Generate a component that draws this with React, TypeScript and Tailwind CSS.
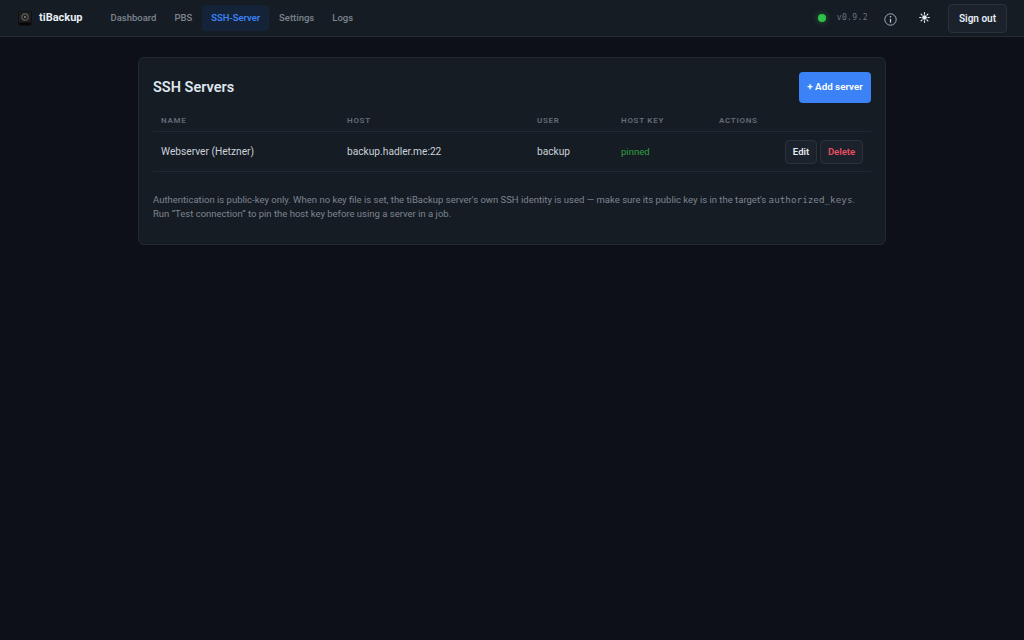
import React from "react";

function Logo() {
  return (
    <svg width="14" height="15" viewBox="0 0 14 15" className="block">
      <rect x="0" y="0" width="14" height="15" rx="2" fill="#111111" />
      <rect x="1" y="1" width="12" height="10" rx="1" fill="#1e1e1e" />
      <circle cx="7" cy="6" r="3.2" fill="none" stroke="#5c5c5c" strokeWidth="1.2" />
      <circle cx="7" cy="6" r="1" fill="#8a8a8a" />
      <rect x="2" y="12" width="10" height="2" fill="#060606" />
    </svg>
  );
}

const th = "pt-[3px] text-left text-[8px] leading-[12px] font-semibold tracking-[0.09em] text-[#646c77] uppercase";
const td = "pt-[2px]";

export default function App() {
  return (
    <div className="min-h-[640px] bg-[#0d1117] font-['Roboto',sans-serif] text-[#c9d1d9]">
      <header className="flex h-[37px] items-center border-b border-[#252c35] bg-[#161c24] pl-[18px] pr-[17px]">
        <Logo />
        <span className="ml-[7px] text-[11px] font-bold text-[#e6edf3]">tiBackup</span>
        <nav className="ml-[20px] flex items-center gap-[2px] text-[9.5px] font-medium text-[#7d8590]">
          <a className="px-2 py-[6px]">Dashboard</a>
          <a className="px-2 py-[6px]">PBS</a>
          <a className="rounded-[4px] bg-[#152339] px-[9px] py-[6px] text-[9.4px] font-semibold text-[#3b82f6]">SSH-Server</a>
          <a className="px-2 py-[6px]">Settings</a>
          <a className="px-2 py-[6px]">Logs</a>
        </nav>
        <div className="ml-auto flex items-center">
          <span className="h-2 w-2 rounded-full bg-[#2fc14a] shadow-[0_0_6px_#2ea04399]" />
          <span className="ml-[11px] font-['DejaVu_Sans_Mono',monospace] text-[8px] tracking-[0.05em] text-[#6b7480]">v0.9.2</span>
          <svg width="13" height="13" viewBox="0 0 13 13" className="ml-[16px] mt-[2px]" fill="none">
            <circle cx="6.5" cy="6.5" r="5.7" stroke="#a3abb5" strokeWidth="1" />
            <path d="M6.5 5.8v3.8" stroke="#c9d1d9" strokeWidth="1.2" />
            <circle cx="6.5" cy="3.8" r="0.8" fill="#c9d1d9" />
          </svg>
          <svg width="11" height="11" viewBox="0 0 24 24" className="ml-[22px] -mt-[2px]" fill="#e6edf3" stroke="#e6edf3" strokeWidth="2.6" strokeLinecap="round">
            <circle cx="12" cy="12" r="5" stroke="none" />
            <path d="M12 1.5v3M12 19.5v3M1.5 12h3M19.5 12h3M4.6 4.6l2.1 2.1M17.3 17.3l2.1 2.1M4.6 19.4l2.1-2.1M17.3 6.7l2.1-2.1" />
          </svg>
          <button className="ml-[18px] h-[29px] w-[59px] rounded-[4px] border border-[#2a313b] bg-[#1b222b] text-[10px] font-semibold text-[#e6edf3]">Sign out</button>
        </div>
      </header>

      <main className="mx-auto mt-[20px] w-[748px]">
        <section className="h-[188px] rounded-[6px] border border-[#222932] bg-[#161c24] px-[14px] pt-[14px]">
          <div className="flex h-[31px] items-center justify-between">
            <h1 className="text-[14.5px] font-semibold text-[#dfe6ee]">SSH Servers</h1>
            <button className="h-[31px] w-[72px] rounded-[4px] bg-[#3b82f6] text-[9.8px] font-semibold text-white">+ Add server</button>
          </div>
          <table className="mt-[5px] w-full table-fixed border-collapse text-[10.2px]">
            <colgroup>
              <col className="w-[194px]" />
              <col className="w-[190px]" />
              <col className="w-[84px]" />
              <col className="w-[98px]" />
              <col />
            </colgroup>
            <thead>
              <tr className="h-[23px] border-b border-[#222932]">
                <th className={`${th} pl-[8px]`}>Name</th>
                <th className={th}>Host</th>
                <th className={th}>User</th>
                <th className={th}>Host Key</th>
                <th className={th}>Actions</th>
              </tr>
            </thead>
            <tbody>
              <tr className="h-[40px] border-b border-[#222932] text-[#c9d1d9]">
                <td className={`${td} pl-[8px]`}>Webserver (Hetzner)</td>
                <td className={td}>backup.hadler.me:22</td>
                <td className={td}>backup</td>
                <td className={`${td} text-[9.5px] text-[#2ea043]`}>pinned</td>
                <td className={td}>
                  <div className="flex justify-end gap-[3px] pr-[8px]">
                    <button className="h-[24px] w-[32px] rounded-[4px] border border-[#2a313b] bg-[#1b222b] text-[9.5px] font-semibold text-[#e6edf3]">Edit</button>
                    <button className="h-[24px] w-[43px] rounded-[4px] border border-[#2a313b] bg-[#1b222b] text-[9.5px] font-semibold text-[#ec4d62]">Delete</button>
                  </div>
                </td>
              </tr>
            </tbody>
          </table>
          <p className="mt-[21px] text-[9.5px] leading-[14px] text-[#7d8590]">
            Authentication is public-key only. When no key file is set, the tiBackup server's own SSH identity is used — make sure its public key is in the target's{" "}
            <code className="font-['DejaVu_Sans_Mono',monospace] text-[9.3px]">authorized_keys</code>.
            <br />
            Run “Test connection” to pin the host key before using a server in a job.
          </p>
        </section>
      </main>
    </div>
  );
}
